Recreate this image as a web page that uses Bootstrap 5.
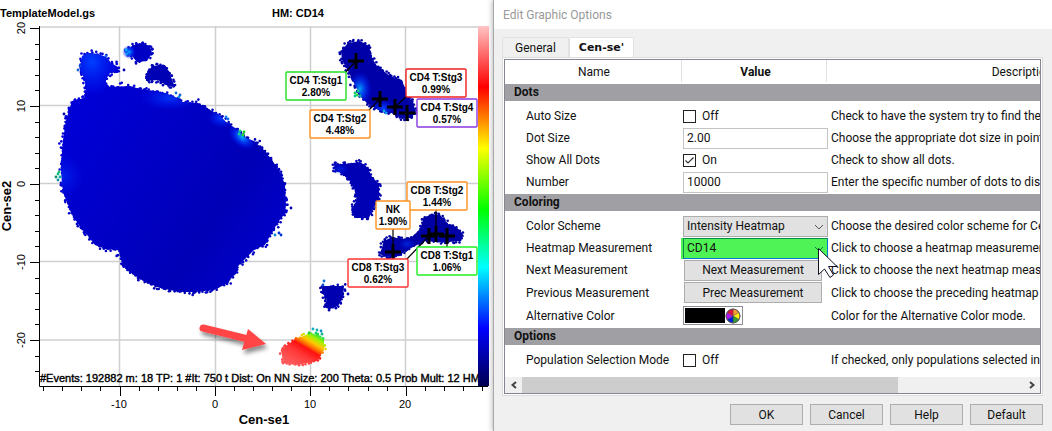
<!DOCTYPE html>
<html lang="en">
<head>
<meta charset="utf-8">
<meta name="viewport" content="width=device-width, initial-scale=1">
<title>Edit Graphic Options</title>
<link href="https://cdn.jsdelivr.net/npm/bootstrap@5.3.0/dist/css/bootstrap.min.css" rel="stylesheet">
<style>
  body { font-family: Roboto, "Open Sans", sans-serif; font-size: 12px; line-height: 16px; color: #111; background: #fff; }
  .workspace { display: grid; grid-template-columns: 493fr 559fr; min-height: 100vh; }
  .plot { background: #fff; }
  .plot svg { display: block; width: 100%; height: auto; }
  .plot text { font-family: "Liberation Sans", Arial, sans-serif; font-size: 11px; fill: #000; }
  .plot .strong { font-weight: 700; }
  .plot .axis-name { font-weight: 700; font-size: 13px; }
  .plot .stats { stroke: #000; stroke-width: .4; }
  .plot .gate text { font-weight: 700; font-size: 10px; text-anchor: middle; }
  .plot .gate rect { fill: #fff; stroke-width: 1.4; }
  .dialog-win { background: #f0f0f0; border-left: 1px solid #a8a8a8; box-shadow: -1px 0 5px rgba(0,0,0,.25); min-width: 0; }
  .title-bar { height: 29px; background: #fff; color: #999; padding-left: 9px; }
  .tab-row { padding: 8px 9px 0 8px; }
  .tab-row button { height: 20px; border: 1px solid #e2e2e2; border-bottom: 0; background: #f0f0f0; border-radius: 2px 2px 0 0; padding: 0 12px; color: #111; }
  .tab-row button.active { background: #fff; font-family: "DejaVu Sans", sans-serif; font-weight: 700; font-size: 11px; padding: 0 9px; }
  .pane { margin: 0 9px 0 8px; border: 1px solid #dcdcdc; background: #fff; padding: 1px; }
  .sheet { border: 1px solid #828790; overflow: hidden; }
  .props { width: 711px; table-layout: fixed; border-collapse: collapse; white-space: nowrap; }
  .props th, .props td { padding: 0; height: 22px; vertical-align: middle; }
  .props thead th { height: 24px; font-weight: 400; text-align: center; background: linear-gradient(#e2e2e2,#e2e2e2) right 1px top/1px 22px no-repeat; }
  .props thead th:nth-child(2) { font-weight: 700; }
  .props .band th { height: 17px; line-height: 17px; background: #a0a0a4; padding-left: 9px; }
  .props tbody td:first-child { padding-left: 21px; }
  .props tbody td:last-child { padding-left: 3px; }
  .props .band + tr td { height: 26px; padding-top: 4px; }
  .props tr.tall td { height: 23px; }
  .props tr.end td { height: 23px; padding-bottom: 1px; }
  .props tr.tall.end td { height: 24px; }
  .props tr.wide-end td { height: 32px !important; padding-bottom: 6px; }
  .check-line { gap: 6px; }
  .field { display: block; width: 145px; height: 21px; border: 1px solid #c4c4c4; border-radius: 0; padding: 0 3px; background: #fff; font-size: 12px; line-height: 16px; color: #111; }
  select.field { appearance: none; background: #e1e1e1; border-color: #adadad; }
  select.field.hot { background: #50f356; border-color: #0a8a4a #0078d7 #0078d7 #0a8a4a; box-shadow: -2px 0 0 #50f356; }
  .pick { position: relative; width: 145px; }
  .pick .chev { position: absolute; right: 4px; top: 8px; pointer-events: none; }
  .pick .pointer { position: absolute; left: 134px; top: 9px; z-index: 3; pointer-events: none; }
  .tick { appearance: none; width: 13px; height: 13px; border: 1px solid #222; background: #fff; margin: 0; border-radius: 0; }
  .tick:checked { background: #fff url("data:image/svg+xml,%3Csvg xmlns='http://www.w3.org/2000/svg' viewBox='0 0 11 11'%3E%3Cpath d='M1.5 5.5 4 8 9.500 2.500' fill='none' stroke='%23333' stroke-width='1.200'/%3E%3C/svg%3E") center/11px no-repeat; }
  .push { height: 21px; border: 1px solid #adadad; border-radius: 0; background: #e1e1e1; padding: 0; color: #111; line-height: 16px; }
  .push.cell { display: block; width: 138px; margin-left: 1px; }
  .push.foot { width: 73px; }
  .swatch { width: 60px; height: 19px; border: 1px solid #8c8c94; background: #fff; padding: 1px; }
  .swatch i { flex: 0 0 40px; height: 15px; background: #000; }
  .scroller { height: 16px; background: #f0f0f0; }
  .scroller .thumb { width: 75%; background: #cdcdcd; }
  .scroller button { width: 17px; border: 0; background: #f0f0f0; padding: 0; }
  .foot-row { padding: 8px 9px 6px 0; gap: 7px; }
</style>
</head>
<body>
<main class="workspace">
  <section class="plot" aria-label="Heatmap plot">
    <svg viewBox="0 0 493 431" role="img" aria-label="Cen-se plot coloured by CD14">
      <defs>
        <linearGradient id="bar" x1="0" y1="0" x2="0" y2="1">
          <stop offset="0" stop-color="#ffc4c4"/><stop offset=".17" stop-color="#ff0000"/><stop offset=".34" stop-color="#ffff00"/>
          <stop offset=".51" stop-color="#00ff00"/><stop offset=".67" stop-color="#00ffff"/><stop offset=".84" stop-color="#0000ff"/><stop offset="1" stop-color="#000050"/>
        </linearGradient>
        <linearGradient id="body" gradientUnits="userSpaceOnUse" x1="70" y1="100" x2="280" y2="230">
          <stop offset="0" stop-color="#0000d8"/><stop offset=".45" stop-color="#0000c4"/><stop offset=".75" stop-color="#0000b6"/><stop offset="1" stop-color="#0000c8"/>
        </linearGradient>
        <linearGradient id="warm" gradientUnits="userSpaceOnUse" x1="298" y1="366" x2="318" y2="332">
          <stop offset="0" stop-color="#ff5858"/><stop offset=".3" stop-color="#ff3838"/><stop offset=".5" stop-color="#ff1010"/><stop offset=".58" stop-color="#ff6a00"/>
          <stop offset=".7" stop-color="#ffc800"/><stop offset=".82" stop-color="#a8f000"/><stop offset=".95" stop-color="#20e040"/><stop offset="1" stop-color="#10c090"/>
        </linearGradient>
        <radialGradient id="lit"><stop offset="0" stop-color="#0040ff"/><stop offset="1" stop-color="#0020ff" stop-opacity="0"/></radialGradient>
        <radialGradient id="glow"><stop offset="0" stop-color="#00b0ff"/><stop offset=".4" stop-color="#0050ff" stop-opacity=".8"/><stop offset="1" stop-color="#0010ff" stop-opacity="0"/></radialGradient>
        <filter id="drop" x="-20%" y="-30%" width="150%" height="200%"><feDropShadow dx="2" dy="4" stdDeviation="2" flood-opacity=".45"/></filter>
        <clipPath id="inMain"><use href="#mainShape"/></clipPath>
        <clipPath id="inCd4"><use href="#cd4Shape"/></clipPath>
        <clipPath id="inFrame"><rect x="40" y="370" width="438" height="16"/></clipPath>
      </defs>

      <path stroke="#cfcfcf" stroke-width="1.500" d="M119.500 26V386M215.500 26V386M310.500 26V386M405.500 26V386M40 27H478M40 105.500H478M40 183.500H478M40 261.500H478M40 340H478"/>

      <g id="islands" stroke-linejoin="round">
        <path id="mainShape" class="isle" fill="url(#body)" d="M72 101 84 98 86 88 84 78 80 70 82 56 88 53 98 54 106 57 111 63 118 67 118 72 110 73 106 79 106 84 110 87 130 86 140 89 155 91 165 93 175 97 182 102 198 103 210 110 218 114 226 122 238 130 246 138 254 141 263 149 272 160 280 172 285 185 286 205 285 214 281 218 272 232 265 245 254 250 245 259 238 266 237 272 226 284 214 290 195 292 180 292 160 288 145 282 128 271 122 264 119 251 115 249 108 250 95 245 88 236 80 227 72 214 64 195 62 185 61 165 63 140 66 120Z"/>
        <path class="isle" fill="#0000c4" d="M127 50 132 46 140 43 150 46 152 53 147 61 137 62 132 56 127 54Z"/>
        <path class="isle" fill="#0000b4" d="M146 75 152 66 165 65 169 72 173 82 175 87 166 85 158 80 146 81Z"/>
        <path id="cd4Shape" class="isle" fill="#0000a8" d="M341 51 348 43 360 41 369 46 372 58 377 66 390 76 402 80 406 92 413 103 416 112 411 118 402 119 392 113 380 111 368 104 361 97 355 85 348 71 342 60Z"/>
        <path class="isle" fill="#0000b4" d="M334 164 345 164 360 162 366 166 372 177 379 184 379 198 372 211 369 218 355 218 351 210 357 200 354 188 349 180 342 173 335 171Z"/>
        <path class="isle" fill="#0000a4" d="M380 254 384 241 392 237 402 239 412 237 420 229 424 218 432 214 440 215 448 224 456 227 463 234 460 241 448 242 436 242 425 241 415 246 405 251 399 256 386 257Z"/>
        <path class="isle" fill="#0000b0" d="M322 286 330 286 344 286 343 297 338 306 330 309 324 307 327 299 322 293Z"/>
        <path class="isle" fill="url(#warm)" d="M281 351 287 345 296 339 308 334 319 335 324 341 324 350 317 361 307 363 296 365 284 363Z"/>
      </g>
      <g clip-path="url(#inMain)">
        <ellipse cx="92" cy="62" rx="28" ry="34" fill="url(#lit)"/>
        <ellipse cx="170" cy="98" rx="30" ry="12" fill="url(#lit)" opacity=".8"/>
        <ellipse cx="242" cy="137" rx="16" ry="10" fill="url(#glow)" transform="rotate(40 242 137)"/>
        <ellipse cx="222" cy="118" rx="14" ry="10" fill="url(#lit)"/>
        <ellipse cx="62" cy="176" rx="22" ry="22" fill="url(#lit)" opacity=".5"/>
      </g>
      <ellipse cx="129" cy="52" rx="7" ry="7" fill="url(#glow)"/>
      <ellipse cx="360" cy="89" rx="12" ry="18" fill="url(#glow)" clip-path="url(#inCd4)" opacity=".9"/>
      <ellipse cx="383" cy="108" rx="12" ry="8" fill="url(#lit)" clip-path="url(#inCd4)"/>
      <ellipse cx="407" cy="244" rx="9" ry="6" fill="url(#lit)" opacity=".6"/>
      <ellipse cx="340" cy="169" rx="9" ry="6" fill="url(#lit)" opacity=".5"/>
      <g id="strays"></g>

      <rect x="478" y="26" width="11" height="360" fill="url(#bar)"/>
      <path d="M39.500 26V386.500H488" fill="none" stroke="#000"/>
      <path id="ticks" stroke="#000"/>

      <path stroke="#000" stroke-width="1.200" d="M356 61 344 74M380 99 368 111M395 107 408 95M407 113H418M436 234V209M393 252V228M429 236 405 261M447 236V248"/>
      <path stroke="#000" stroke-width="3" d="M348 61h16M356 53v16M372 99h16M380 91v16M387 107h16M395 99v16M399 113h16M407 105v16M385 252h16M393 244v16M421 236h16M429 228v16M428 234h16M436 226v16M439 236h16M447 228v16"/>

      <g id="gates"></g>

      <g filter="url(#drop)">
        <path d="M203 328 248 339" stroke="#ff4444" stroke-width="7" stroke-linecap="round"/>
        <path d="M248 329 266 344 242 350Z" fill="#ff4444"/>
      </g>

      <text class="strong" x="0" y="17">TemplateModel.gs</text>
      <text class="strong" x="272" y="17">HM: CD14</text>
      <g clip-path="url(#inFrame)"><text class="stats" x="40" y="382">#Events: 192882 m: 18 TP: 1 #It: 750 t Dist: On NN Size: 200 Theta: 0.5 Prob Mult: 12 HM</text></g>
      <g text-anchor="middle">
        <text x="119" y="408">-10</text><text x="215" y="408">0</text><text x="310" y="408">10</text><text x="405" y="408">20</text>
        <text transform="translate(25 28) rotate(-90)">20</text><text transform="translate(25 106) rotate(-90)">10</text>
        <text transform="translate(25 184) rotate(-90)">0</text><text transform="translate(25 262) rotate(-90)">-10</text><text transform="translate(25 340) rotate(-90)">-20</text>
        <text class="axis-name" x="264" y="424">Cen-se1</text>
        <text class="axis-name" transform="translate(11 206) rotate(-90)">Cen-se2</text>
      </g>
    </svg>
  </section>

  <section class="dialog-win" aria-label="Edit Graphic Options">
    <header class="title-bar d-flex align-items-center">Edit Graphic Options</header>
    <div class="tab-row d-flex" role="tablist">
      <button type="button" role="tab">General</button>
      <button type="button" role="tab" class="active" aria-selected="true">Cen-se'</button>
    </div>
    <div class="pane">
      <div class="sheet">
        <table class="props">
          <colgroup><col style="width:178px"><col style="width:145px"><col style="width:388px"></colgroup>
          <thead><tr><th scope="col">Name</th><th scope="col">Value</th><th scope="col">Description</th></tr></thead>
          <tbody>
            <tr class="band"><th colspan="3">Dots</th></tr>
            <tr><td><label for="auto">Auto Size</label></td><td><span class="check-line d-flex align-items-center"><input class="tick" type="checkbox" id="auto"><label for="auto">Off</label></span></td><td>Check to have the system try to find the best dot size.</td></tr>
            <tr><td><label for="size">Dot Size</label></td><td><input class="field" id="size" value="2.00"></td><td>Choose the appropriate dot size in points.</td></tr>
            <tr><td><label for="all">Show All Dots</label></td><td><span class="check-line d-flex align-items-center"><input class="tick" type="checkbox" id="all" checked><label for="all">On</label></span></td><td>Check to show all dots.</td></tr>
            <tr class="end"><td><label for="num">Number</label></td><td><input class="field" id="num" value="10000"></td><td>Enter the specific number of dots to display.</td></tr>
            <tr class="band"><th colspan="3">Coloring</th></tr>
            <tr><td><label for="scheme">Color Scheme</label></td><td><div class="pick"><select class="field" id="scheme"><option>Intensity Heatmap</option></select><svg class="chev" width="10" height="6"><path d="M1 1 5 5 9 1" fill="none" stroke="#555"/></svg></div></td><td>Choose the desired color scheme for Cen-se'.</td></tr>
            <tr><td><label for="heat">Heatmap Measurement</label></td><td><div class="pick"><select class="field hot" id="heat"><option>CD14</option></select><svg class="chev" width="10" height="6"><path d="M1 1 5 5 9 1" fill="none" stroke="#174"/></svg>
              <svg class="pointer" width="22" height="32"><path d="M1.500 1.500V27.500L7.500 22 13 30.500 16.500 28 11.500 19.500H20Z" fill="#fff" stroke="#112"/></svg></div></td><td>Click to choose a heatmap measurement.</td></tr>
            <tr><td>Next Measurement</td><td><button type="button" class="push cell">Next Measurement</button></td><td>Click to choose the next heatmap measurement.</td></tr>
            <tr class="tall"><td>Previous Measurement</td><td><button type="button" class="push cell">Prec Measurement</button></td><td>Click to choose the preceding heatmap measurement.</td></tr>
            <tr class="tall end"><td>Alternative Color</td><td><button type="button" class="swatch d-flex align-items-center" aria-label="Alternative Color"><i></i>
              <svg class="ms-auto" width="16" height="16" viewBox="-8 -8 16 16"><g stroke="#444" stroke-width=".4"><path d="M0 0 0-7A7 7 0 0 1 6-3.500Z" fill="#ff9a30"/><path d="M0 0 6-3.500A7 7 0 0 1 6 3.500Z" fill="#ffee10"/><path d="M0 0 6 3.500A7 7 0 0 1 0 7Z" fill="#30a030"/><path d="M0 0 0 7A7 7 0 0 1-6 3.500Z" fill="#0020e0"/><path d="M0 0-6 3.500A7 7 0 0 1-6-3.500Z" fill="#b010ff"/><path d="M0 0-6-3.500A7 7 0 0 1 0-7Z" fill="#e01040"/></g><circle r="7" fill="none" stroke="#555"/></svg></button></td><td>Color for the Alternative Color mode.</td></tr>
            <tr class="band"><th colspan="3">Options</th></tr>
            <tr class="wide-end"><td><label for="pop">Population Selection Mode</label></td><td><span class="check-line d-flex align-items-center"><input class="tick" type="checkbox" id="pop"><label for="pop">Off</label></span></td><td>If checked, only populations selected in the plot.</td></tr>
          </tbody>
        </table>
        <div class="scroller d-flex">
          <button type="button" aria-label="Scroll left"><svg class="d-block m-auto" width="8" height="8"><path d="M6 1 2.500 4 6 7" fill="none" stroke="#444" stroke-width="2"/></svg></button>
          <div class="flex-grow-1 d-flex"><div class="thumb"></div></div>
          <button type="button" aria-label="Scroll right"><svg class="d-block m-auto" width="8" height="8"><path d="M2 1 5.500 4 2 7" fill="none" stroke="#444" stroke-width="2"/></svg></button>
        </div>
      </div>
    </div>
    <footer class="foot-row d-flex justify-content-end">
      <button type="button" class="push foot">OK</button>
      <button type="button" class="push foot">Cancel</button>
      <button type="button" class="push foot">Help</button>
      <button type="button" class="push foot">Default</button>
    </footer>
  </section>
</main>
<script src="https://cdn.jsdelivr.net/npm/bootstrap@5.3.0/dist/js/bootstrap.bundle.min.js"></script>
<script>
  const NS = "http://www.w3.org/2000/svg";
  const add = (parent, tag, attrs, text) => {
    const el = document.createElementNS(NS, tag);
    for (const k in attrs) el.setAttribute(k, attrs[k]);
    if (text) el.textContent = text;
    parent.appendChild(el);
    return el;
  };
  let seed = 7;
  const rnd = () => (seed = (seed * 16807) % 2147483647) / 2147483647;

  // Events scattered along the rim of every population
  document.querySelectorAll(".isle").forEach(p => {
    const len = p.getTotalLength();
    const fill = p.getAttribute("fill");
    for (let d = 0; d < len; d += 2) {
      const q = p.getPointAtLength(d);
      const spread = rnd() < .15 ? 7 : 3.4;
      add(p.parentNode, "circle", { cx: q.x + (rnd() - .5) * spread, cy: q.y + (rnd() - .5) * spread, r: 1.3, fill });
    }
  });

  // Single bright events: x, y, colour
  [[240,131,"#10d090"],[244,132,"#10d020"],[243,135,"#20e020"],[239,134,"#10d0a0"],[58,174,"#10c080"],[60,177,"#10b0a0"],[56,177,"#109070"],[59,172,"#20c070"],[58,180,"#1090a0"],
   [355,93,"#10d060"],[357,95,"#20e040"],[358,91,"#10d090"],[360,96,"#10b0a0"],[355,96,"#10c090"],[386,113,"#1090ff"],[384,111,"#10b0e0"],
   [176,93,"#1070e0"],[179,97,"#1090e0"],[180,95,"#1060d0"],[226,117,"#1080ff"],[228,119,"#1070f0"],[106,56,"#1060e0"],[80,66,"#1050d0"],[78,70,"#1060d0"],
   [126,50,"#10b0ff"],[127,54,"#1090f0"],[313,329,"#10b0c0"],[317,330,"#10b0b0"],[321,331,"#1090c0"],[316,333,"#20d070"],[322,334,"#10b090"],[309,333,"#20d040"],
   [324,281,"#1070e0"],[323,285,"#1050d0"],[275,235,"#1080d0"],[279,233,"#0030d0"],[281,235,"#0030d0"],[291,208,"#0000b0"],[64,114,"#0000b0"],[124,70,"#0000b0"],[348,294,"#0000b0"]
  ].forEach(([cx, cy, fill]) => add(strays, "circle", { cx, cy, r: 1.4, fill }));

  // Population labels: box, colour, name and share
  [[286,72,60,"#20e020","CD4 T:Stg1","2.80%"],[310,110,60,"#ff9020","CD4 T:Stg2","4.48%"],[406,69,60,"#f02020","CD4 T:Stg3","0.99%"],[417,99,60,"#8a38e0","CD4 T:Stg4","0.57%"],
   [407,182,60,"#ff9020","CD8 T:Stg2","1.44%"],[376,201,34,"#ff9020","NK","1.90%"],[348,259,60,"#ff3030","CD8 T:Stg3","0.62%"],[417,247,60,"#20f020","CD8 T:Stg1","1.06%"]
  ].forEach(([x, y, w, stroke, name, share]) => {
    const g = add(gates, "g", { class: "gate" });
    add(g, "rect", { x, y, width: w, height: 28, rx: 1, stroke });
    add(g, "text", { x: x + w / 2, y: y + 12 }, name);
    add(g, "text", { x: x + w / 2, y: y + 24 }, share);
  });

  let t = "";
  for (let i = 0; i < 23; i++) t += `M${i % 5 ? 35 : 30} ${Math.round(28 + i * 15.6) + .5}H39`;
  for (let i = -4; i <= 15; i++) t += `M${Math.round(119.5 + i * 19.08) + .5} 386V${i % 5 ? 391 : 396}`;
  for (let i = 16; i <= 19; i++) t += `M${Math.round(119.5 + i * 19.08) + .5} 386V391`;
  ticks.setAttribute("d", t);
</script>
</body>
</html>
